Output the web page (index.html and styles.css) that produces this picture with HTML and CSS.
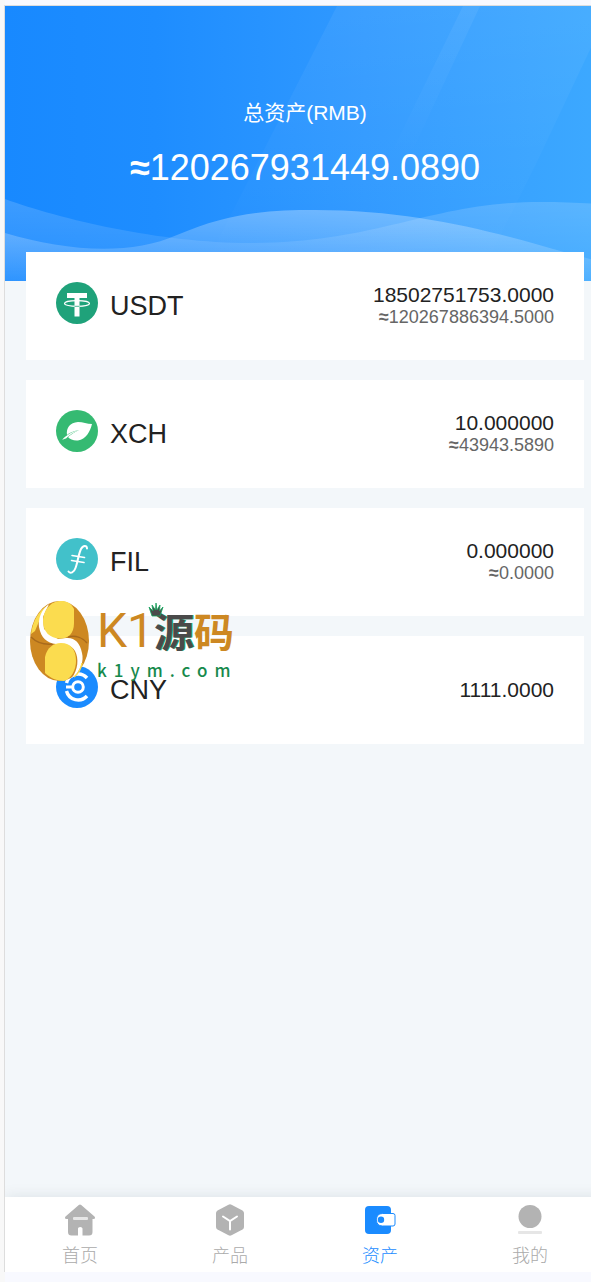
FILE: index.html
```html
<!DOCTYPE html>
<html lang="zh-CN">
<head>
    <meta charset="UTF-8">
    <meta name="viewport" content="width=device-width, initial-scale=1.0">
    <title>资产</title>
    <link rel="stylesheet" href="styles.css">
</head>
<body>
    <div class="app">
        <header class="header">
            <svg class="header-bg" viewBox="0 0 600 275" preserveAspectRatio="none" aria-hidden="true">
                <defs>
                    <linearGradient id="sky" x1="0" y1="0" x2="1" y2="0">
                        <stop offset="0" stop-color="#1889ff"/>
                        <stop offset="0.25" stop-color="#1e8dff"/>
                        <stop offset="0.6" stop-color="#3099ff"/>
                        <stop offset="1" stop-color="#3da9ff"/>
                    </linearGradient>
                    <linearGradient id="ray" x1="0" y1="0" x2="0" y2="1">
                        <stop offset="0" stop-color="#fff" stop-opacity="0.06"/>
                        <stop offset="1" stop-color="#fff" stop-opacity="0"/>
                    </linearGradient>
                    <linearGradient id="waveBack" gradientUnits="userSpaceOnUse" x1="0" y1="193" x2="0" y2="275">
                        <stop offset="0" stop-color="#fff" stop-opacity="0.16"/>
                        <stop offset="1" stop-color="#fff" stop-opacity="0.04"/>
                    </linearGradient>
                    <linearGradient id="waveFront" gradientUnits="userSpaceOnUse" x1="0" y1="203" x2="0" y2="275">
                        <stop offset="0" stop-color="#fff" stop-opacity="0.31"/>
                        <stop offset="1" stop-color="#fff" stop-opacity="0.06"/>
                    </linearGradient>
                </defs>
                <rect width="600" height="275" fill="url(#sky)"/>
                <path d="M332 0H600V12L530 160L480 260H200Z" fill="url(#ray)"/>
                <path d="M458 0H475L405 150H385Z" fill="url(#ray)"/>
                <path d="M0 193C55 213 155 237 245 237C375 237 425 196 536 196C560 196 585 197 600 199V275H0Z" fill="url(#waveBack)"/>
                <path d="M0 227C60 245 125 250 172 229C225 206 265 204 310 204C410 204 490 226 559 246L600 257V275H0Z" fill="url(#waveFront)"/>
            </svg>
            <div class="total-label">总资产(RMB)</div>
            <div class="total-value"><b>≈</b>120267931449.0890</div>
        </header>

        <main class="assets">
            <section class="card">
                <svg class="coin" viewBox="0 0 42 42" aria-hidden="true">
                    <circle cx="21" cy="21" r="21" fill="#1fa27a"/>
                    <path d="M11 11H31V16H23.500V34.500H18.500V16H11Z" fill="#fff"/>
                    <ellipse cx="21" cy="21.500" rx="12.500" ry="2.800" fill="none" stroke="#fff" stroke-width="1.200"/>
                    <path d="M18.500 24.300H23.500" stroke="#1fa27a" stroke-width="0.800"/>
                </svg>
                <h2 class="coin-name">USDT</h2>
                <div class="amounts">
                    <div class="amount">18502751753.0000</div>
                    <div class="amount-rmb"><b>≈</b>120267886394.5000</div>
                </div>
            </section>
            <section class="card">
                <svg class="coin" viewBox="0 0 42 42" aria-hidden="true">
                    <circle cx="21" cy="21" r="21" fill="#35ba72"/>
                    <path d="M11 25C10 18 14 12.500 22 12C27 12 31 14 36 14C34 22 30 29 22 30.500C18 31 14 29.500 12 27C15 24.500 18 22.500 23 20C17 21 13 23 11 25Z" fill="#fff"/>
                    <path d="M6 30C10 25.500 15 22 23 20C17 22.500 13 25.500 10 28.500C8.500 29 7 29.300 6 30Z" fill="#fff"/>
                </svg>
                <h2 class="coin-name">XCH</h2>
                <div class="amounts">
                    <div class="amount">10.000000</div>
                    <div class="amount-rmb"><b>≈</b>43943.5890</div>
                </div>
            </section>
            <section class="card">
                <svg class="coin" viewBox="0 0 42 42" aria-hidden="true">
                    <circle cx="21" cy="21" r="21" fill="#42c1ca"/>
                    <g fill="none" stroke="#fff" stroke-linecap="round">
                        <path d="M31 10.500C31 7 27 7 25 11C22.500 16 21.500 25 19.500 30C18 34.500 14.500 36 12.500 33.500" stroke-width="2"/>
                        <path d="M16 17.500L28.500 19.500M15.500 22.500L28 24.500" stroke-width="1.600"/>
                    </g>
                </svg>
                <h2 class="coin-name">FIL</h2>
                <div class="amounts">
                    <div class="amount">0.000000</div>
                    <div class="amount-rmb"><b>≈</b>0.0000</div>
                </div>
            </section>
            <section class="card">
                <svg class="coin" viewBox="0 0 42 42" aria-hidden="true">
                    <circle cx="21" cy="21" r="21" fill="#1a8bff"/>
                    <g fill="none" stroke="#fff" stroke-width="3">
                        <circle cx="22" cy="21" r="5.300"/>
                        <path d="M10 21H17"/>
                        <path d="M31 12A12 12 0 0 0 10.500 17M10.500 25A12 12 0 0 0 31 30" stroke-width="3.400"/>
                    </g>
                </svg>
                <h2 class="coin-name">CNY</h2>
                <div class="amounts">
                    <div class="amount">1111.0000</div>
                </div>
            </section>

            <div class="mark">
                <svg class="mark-logo" viewBox="0 0 60 80" aria-hidden="true">
                    <ellipse cx="29.500" cy="40" rx="29.500" ry="40" fill="#cd8822"/>
                    <path d="M18 4C8 10 3 20 1 33L5 30L10 18Z" fill="#fbdc4f"/>
                    <path d="M1 36C7 42 14 44 23 43" fill="none" stroke="#a86a1c" stroke-width="1.500"/>
                    <path d="M38 36C46 34 53 37 57 42" fill="none" stroke="#a86a1c" stroke-width="1.500"/>
                    <path d="M19 3C11 9 8 18 9 26C11 37 17 42 26 43C34 43 41 43 45 50C49 58 48 68 42 77C51 70 54 60 52 52C50 41 44 36 36 37L28 38L14 28L13 16Z" fill="#fff"/>
                    <path d="M13 20C13 10 20 0 31 0C37 0 41 2 44 8V22C44 33 38 37.500 30 37.500C20 37.500 13 31 13 20Z" fill="#fbdc4f"/>
                    <path d="M15 56C17 47 23 42 31 42C41 42 46 49 46 60C46 69 41 78 34 80C27 80 20 77 15 72Z" fill="#fbdc4f"/>
                    <path d="M52 62C51 68 48 73 44 76" fill="none" stroke="#fbdc4f" stroke-width="1.500"/>
                </svg>
                <div class="mark-text">
                    <div class="mark-name"><span class="mark-k1">K1</span><span class="mark-yuan">源</span><span class="mark-ma">码</span></div>
                    <div class="mark-url">k1ym.com</div>
                </div>
                <svg class="mark-crown" viewBox="0 0 16 16" aria-hidden="true">
                    <path d="M1 5L5 9L4 3L7.500 8L8 1L9 8L12 3L11.500 9L15 5L12 14H4Z" fill="#4a4a4a" stroke="#12a35a" stroke-width="0.800"/>
                </svg>
            </div>
        </main>

        <nav class="tabbar">
            <a class="tab" href="#home">
                <svg viewBox="0 0 32 32" aria-hidden="true">
                    <path d="M14.800 1Q16 0 17.200 1L30.500 12.500Q32 14.500 29.500 15H28.500V28Q28.500 31.500 25 31.500H18.500V24.500Q18.500 23 16.200 23Q14 23 14 24.500V31.500H7.500Q4 31.500 4 28V15H2.500Q0 14.500 1.500 12.500Z" fill="#b3b3b3"/>
                    <rect x="9" y="13" width="15" height="3" rx="1" fill="#e6e6e6"/>
                </svg>
                <span>首页</span>
            </a>
            <a class="tab" href="#product">
                <svg viewBox="0 0 32 32" aria-hidden="true">
                    <path d="M14.500 0.700Q16 0 17.500 0.700L28.500 6.500Q30 7.500 30 9V23Q30 24.500 28.500 25.500L17.500 31.300Q16 32 14.500 31.300L3.500 25.500Q2 24.500 2 23V9Q2 7.500 3.500 6.500Z" fill="#b3b3b3"/>
                    <path d="M9 12.500L16 17L23 12.500M16 17V25.500" fill="none" stroke="#fff" stroke-width="2" stroke-linecap="round"/>
                </svg>
                <span>产品</span>
            </a>
            <a class="tab active" href="#assets">
                <svg viewBox="0 0 32 32" aria-hidden="true">
                    <rect x="1" y="2" width="26" height="28" rx="4" fill="#1a8bff"/>
                    <path d="M18.500 9.500H29Q31 9.500 31 11.500V20Q31 22 29 22H18.500Q12.500 22 12.500 15.700Q12.500 9.500 18.500 9.500Z" fill="#fff" stroke="#1a8bff"/>
                    <circle cx="17" cy="15.700" r="3.200" fill="#1a8bff"/>
                </svg>
                <span>资产</span>
            </a>
            <a class="tab" href="#mine">
                <svg viewBox="0 0 32 32" aria-hidden="true">
                    <circle cx="16" cy="12.500" r="11.500" fill="#b3b3b3"/>
                    <rect x="4" y="27" width="24" height="3" rx="1" fill="#e6e6e6"/>
                </svg>
                <span>我的</span>
            </a>
        </nav>
    </div>
</body>
</html>
```
FILE: styles.css
```css
* {
    box-sizing: border-box;
}
body {
    margin: 0;
    min-height: 100vh;
    padding: 5px 0 10px 4px;
    display: flex;
    background: linear-gradient(to right, #f8f8f8 5px, #f8f9ff 5px);
    font-family: "Liberation Sans", "Noto Sans CJK SC", sans-serif;
    color: #222;
    overflow-x: hidden;
}
/* the screen runs a little past the right edge of the window */
.app {
    flex: 1;
    display: flex;
    flex-direction: column;
    margin-right: -14px;
    border-top: 1px solid #ddd;
    border-left: 1px solid #ddd;
    background: #f3f7fa;
}
.header {
    position: relative;
    height: 275px;
    padding-top: 92px;
    text-align: center;
    color: #fff;
}
.header-bg {
    position: absolute;
    top: 0;
    left: 0;
    width: 100%;
    height: 100%;
}
.total-label {
    position: relative;
    font-size: 21px;
    line-height: 30px;
}
.total-value {
    position: relative;
    margin-top: 15px;
    font-size: 36px;
    line-height: 50px;
}
.assets {
    position: relative;
    flex: 1;
    display: flex;
    flex-direction: column;
    gap: 20px;
    margin: -29px 21px 0;
}
.card {
    display: flex;
    align-items: center;
    height: 108px;
    padding: 0 30px;
    background: #fff;
}
.coin {
    width: 42px;
    height: 42px;
    margin: 0 12px 6px 0;
}
.coin-name {
    margin: 0;
    font-size: 27px;
    font-weight: normal;
}
.amounts {
    margin-left: auto;
    text-align: right;
    line-height: 22px;
}
.amount {
    font-size: 21px;
}
.amount-rmb {
    font-size: 18px;
    color: #666;
}

/* site mark lying over the cards */
.mark {
    position: absolute;
    top: 349px;
    left: 4px;
    display: flex;
    gap: 7px;
    pointer-events: none;
}
.mark-logo {
    width: 60px;
    height: 80px;
}
.mark-name {
    display: flex;
    align-items: center;
    height: 59px;
    font-family: "Noto Sans CJK SC", sans-serif;
    font-size: 40px;
    font-weight: bold;
    line-height: 59px;
}
.mark-k1 {
    font-family: Roboto, sans-serif;
    font-size: 48px;
    font-weight: normal;
    color: #cd8822;
}
.mark-yuan {
    color: #4a4a4a;
    text-shadow: 1px 0 #12a35a;
}
.mark-ma {
    color: #cd8822;
}
.mark-url {
    font-family: "Noto Sans CJK SC", sans-serif;
    font-size: 17px;
    font-weight: 500;
    line-height: 20px;
    letter-spacing: 7px;
    color: #178a4c;
}
.mark-crown {
    position: absolute;
    top: 1px;
    left: 118px;
    width: 16px;
    height: 16px;
}

.tabbar {
    position: relative;
    display: flex;
    height: 75px;
    background: #fff;
    box-shadow: 0 0 14px rgba(0, 40, 60, 0.1);
    clip-path: inset(-20px 0 0 0);
}
.tab {
    flex: 1;
    display: flex;
    flex-direction: column;
    align-items: center;
    gap: 10px;
    padding-top: 7px;
    font-size: 18px;
    font-weight: 300;
    line-height: 20px;
    color: #aaa;
    text-decoration: none;
}
.tab svg {
    width: 32px;
    height: 32px;
}
.tab.active {
    color: #1a8bff;
}
```
